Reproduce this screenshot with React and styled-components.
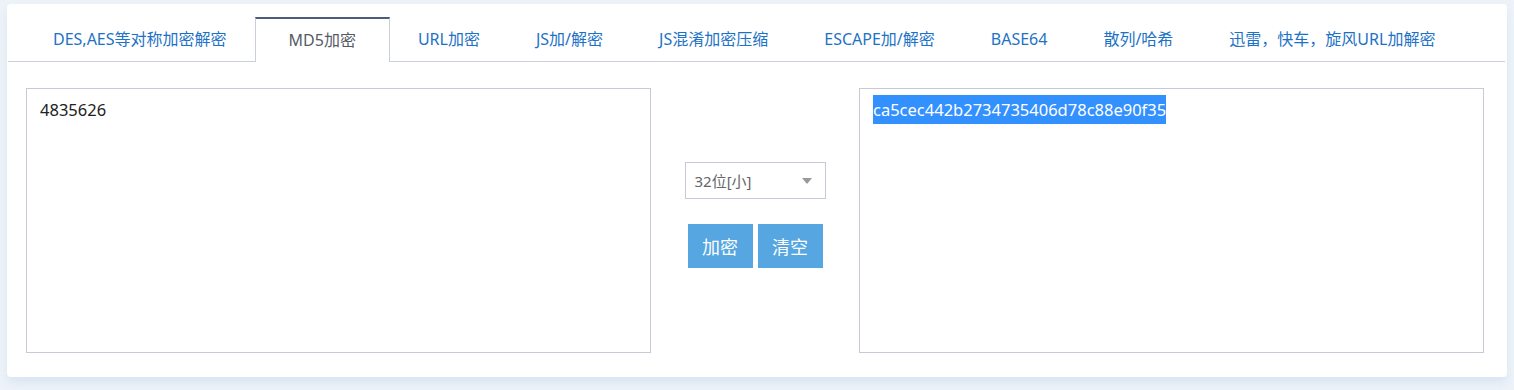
import React from "react";
import styled, { createGlobalStyle } from "styled-components";

const GlobalStyle = createGlobalStyle`
  html, body {
    margin: 0;
    padding: 0;
    background: #eef3f9;
  }
  body {
    font-family: "Noto Sans", "Noto Sans CJK SC", sans-serif;
  }
`;

const tabs = [
  "DES,AES等对称加密解密",
  "MD5加密",
  "URL加密",
  "JS加/解密",
  "JS混淆加密压缩",
  "ESCAPE加/解密",
  "BASE64",
  "散列/哈希",
  "迅雷，快车，旋风URL加解密",
];

const Page = styled.div`
  padding: 4px 7px 0 7px;
  height: 390px;
  box-sizing: border-box;
`;

const Card = styled.div`
  background: #fff;
  border-radius: 4px;
  height: 373px;
  box-sizing: border-box;
  padding: 13px 2px 0 1px;
  box-shadow: 0 6px 10px rgba(200, 218, 238, 0.55);
`;

const TabBar = styled.ul`
  display: flex;
  margin: 0;
  padding: 0 0 0 17px;
  list-style: none;
  border-bottom: 1px solid #c9d0da;
  height: 45px;
  box-sizing: border-box;
`;

const Tab = styled.li`
  height: 44px;
  line-height: 44px;
  font-size: 16px;
  white-space: nowrap;
  box-sizing: border-box;
  color: ${(p) => (p.$active ? "#555b66" : "#1d72c6")};
  padding: 0 ${(p) => (p.$active ? "33px" : "28px")};
  background: #fff;
  ${(p) =>
    p.$active &&
    `
    border-top: 2px solid #4f5c79;
    border-left: 1px solid #c9d0da;
    border-right: 1px solid #c9d0da;
    height: 45px;
    line-height: 42px;
    margin-bottom: -1px;
  `}
`;

const Body = styled.div`
  display: flex;
  padding: 26px 21px 0 18px;
`;

const TextBox = styled.div`
  flex: 1;
  height: 265px;
  box-sizing: border-box;
  border: 1px solid #c5cbd6;
  padding: 6px 13px;
  font-size: 16.5px;
  line-height: 29px;
  color: #222;
`;

const Selected = styled.span`
  background: #3390ff;
  color: #fff;
  display: inline-block;
  line-height: 29px;
`;

const Middle = styled.div`
  width: 208px;
  display: flex;
  flex-direction: column;
  align-items: center;
  padding-top: 74px;
  box-sizing: border-box;
`;

const Select = styled.div`
  width: 141px;
  height: 37px;
  box-sizing: border-box;
  border: 1px solid #c5cbd6;
  display: flex;
  align-items: center;
  justify-content: space-between;
  padding: 0 13px 0 9px;
  font-size: 15px;
  color: #666;
`;

const Caret = styled.span`
  width: 0;
  height: 0;
  border-left: 5px solid transparent;
  border-right: 5px solid transparent;
  border-top: 6px solid #999;
`;

const Buttons = styled.div`
  display: flex;
  gap: 5px;
  margin-top: 25px;
`;

const Button = styled.button`
  width: 65px;
  height: 44px;
  border: none;
  background: #55a6e1;
  color: #fff;
  font-size: 18px;
  font-family: "Noto Sans CJK SC", sans-serif;
  padding: 0;
  cursor: pointer;
`;

export default function App() {
  return (
    <Page>
      <GlobalStyle />
      <Card>
        <TabBar>
          {tabs.map((t) => (
            <Tab key={t} $active={t === "MD5加密"}>
              {t}
            </Tab>
          ))}
        </TabBar>
        <Body>
          <TextBox>4835626</TextBox>
          <Middle>
            <Select>
              32位[小]
              <Caret />
            </Select>
            <Buttons>
              <Button>加密</Button>
              <Button>清空</Button>
            </Buttons>
          </Middle>
          <TextBox>
            <Selected>ca5cec442b2734735406d78c88e90f35</Selected>
          </TextBox>
        </Body>
      </Card>
    </Page>
  );
}
